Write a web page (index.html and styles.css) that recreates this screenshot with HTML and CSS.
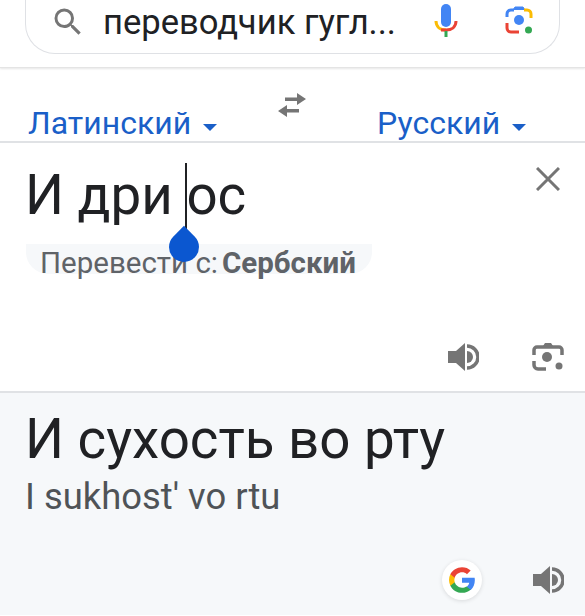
FILE: index.html
```html
<!DOCTYPE html>
<html lang="ru">
<head>
<meta charset="utf-8">
<title>Переводчик</title>
<link rel="stylesheet" href="styles.css">
</head>
<body>
<header class="top">
  <div class="search">
    <svg class="search-icon" viewBox="0 0 24 24" width="36" height="36"><path fill="#757575" d="M15.5 14h-.79l-.28-.27A6.47 6.47 0 0 0 16 9.5 6.5 6.5 0 1 0 9.5 16c1.61 0 3.09-.59 4.23-1.57l.27.28v.79l5 4.99L20.49 19l-4.99-5zm-6 0C7.01 14 5 11.99 5 9.5S7.01 5 9.5 5 14 7.01 14 9.5 11.99 14 9.5 14z"/></svg>
    <span class="query">переводчик гугл...</span>
    <svg class="mic" viewBox="0 0 24 36" width="24" height="36"><rect x="7" y="0" width="10" height="23" rx="5" fill="#4285f4"/><path d="M2 17c0 6 4.500 9 10 9" fill="none" stroke="#fbbc04" stroke-width="3"/><path d="M22 17c0 6-4.500 9-10 9H7" fill="none" stroke="#ea4335" stroke-width="3"/><rect x="10.500" y="27" width="3" height="6" fill="#34a853"/></svg>
    <svg class="lens" viewBox="0 0 28 32" width="28" height="32"><path d="M2 12V9a4 4 0 0 1 4-4h3" fill="none" stroke="#4285f4" stroke-width="3"/><path d="M8 5l2-3h8l2 3" fill="#4285f4" stroke="#4285f4" stroke-width="1"/><path d="M19 5h3a4 4 0 0 1 4 4v4" fill="none" stroke="#fbbc04" stroke-width="3"/><path d="M2 18v5a4 4 0 0 0 4 4h8" fill="none" stroke="#ea4335" stroke-width="3"/><circle cx="14" cy="15" r="5" fill="#4285f4"/><circle cx="23.500" cy="25" r="3.500" fill="#34a853"/></svg>
  </div>
</header>
<nav class="langs">
  <span class="lang lang-src">Латинский<i class="caret"></i></span>
  <svg class="swap" viewBox="0 0 30 24" width="30" height="24"><path fill="#757575" d="M20 0l9 6-9 6V8H8V4.500h12zM10 12v4h12v3.500H10V24l-9-6z"/></svg>
  <span class="lang lang-dst">Русский<i class="caret"></i></span>
</nav>
<section class="source">
  <div class="input-row">
    <div class="input">И дри <span class="cursor"><i class="cursor-line"></i><i class="cursor-drop"></i></span>ос</div>
    <svg class="close" viewBox="0 0 24 24" width="24" height="24"><path d="M1 1l22 22M23 1L1 23" stroke="#757575" stroke-width="3" fill="none"/></svg>
  </div>
  <div class="detect">Перевести с:<b>Сербский</b></div>
  <div class="actions">
    <svg class="speaker" viewBox="0 0 32 32" width="32" height="32"><path fill="#757575" d="M1 10h8l9-8v28l-9-8H1z"/><path fill="none" stroke="#757575" stroke-width="3.500" d="M20 5a11 11 0 0 1 0 22"/><path fill="#757575" d="M20 10a6 6 0 0 1 0 12z"/></svg>
    <svg class="cam" viewBox="0 0 32 32" width="32" height="32"><path d="M2 14v-5a3 3 0 0 1 3-3h22a3 3 0 0 1 3 3v5" fill="none" stroke="#757575" stroke-width="3.500"/><path d="M11 5l2-3h6l2 3z" fill="#757575"/><path d="M2 20v4a4 4 0 0 0 4 4h8" fill="none" stroke="#757575" stroke-width="3.500"/><circle cx="15" cy="16" r="5" fill="#757575"/><circle cx="27" cy="25" r="3.500" fill="#757575"/></svg>
  </div>
</section>
<section class="result">
  <div class="output">И сухость во рту</div>
  <div class="translit">I sukhost' vo rtu</div>
  <div class="actions result-actions">
    <span class="g-badge"><svg viewBox="0 0 48 48" width="28" height="28"><path fill="#4285f4" d="M46 24.500c0-1.600-.1-3.100-.4-4.500H24v8.600h12.400c-.5 2.800-2.100 5.200-4.500 6.800v5.600h7.200C43.400 37 46 31.300 46 24.500z"/><path fill="#34a853" d="M24 46c6 0 11.100-2 14.800-5.400l-7.200-5.600c-2 1.300-4.500 2.100-7.600 2.100-5.800 0-10.800-3.900-12.500-9.200H4v5.800C7.700 41 15.300 46 24 46z"/><path fill="#fbbc04" d="M11.500 27.900c-.9-2.600-.9-5.300 0-7.900v-5.800H4C1 20.200 1 27.700 4 33.700z"/><path fill="#ea4335" d="M24 10.800c3.300 0 6.200 1.100 8.500 3.300l6.400-6.400C35 4 30 2 24 2 15.300 2 7.700 7 4 14.200l7.500 5.800c1.700-5.300 6.700-9.200 12.500-9.200z"/></svg></span>
    <svg class="speaker" viewBox="0 0 32 32" width="32" height="32"><path fill="#757575" d="M1 10h8l9-8v28l-9-8H1z"/><path fill="none" stroke="#757575" stroke-width="3.500" d="M20 5a11 11 0 0 1 0 22"/><path fill="#757575" d="M20 10a6 6 0 0 1 0 12z"/></svg>
  </div>
</section>
</body>
</html>
```
FILE: styles.css
```css
* { box-sizing: border-box; }
html, body { margin: 0; padding: 0; }
body {
  width: 585px;
  height: 616px;
  overflow: hidden;
  background: #fff;
  font-family: Roboto, "Liberation Sans", sans-serif;
  color: #202124;
}
.top {
  height: 68px;
  padding: 0 25px;
  border-bottom: 1px solid #e4e4e4;
  box-shadow: 0 1px 2px rgba(0, 0, 0, 0.1);
}
.search {
  height: 54px;
  display: flex;
  align-items: center;
  border: 1px solid #dfe1e5;
  border-top: 0;
  border-radius: 0 0 30px 30px;
  padding: 0 26px 0 24px;
}
.search-icon { margin-right: 17px; margin-top: -10px; flex: none; }
.query {
  font-size: 34.6px;
  line-height: 44px;
  flex: 1;
  white-space: nowrap;
  margin-top: -10px;
}
.mic { margin-right: 47px; margin-top: -10px; flex: none; }
.lens { margin-top: -12px; flex: none; }
.langs {
  height: 75px;
  padding: 0 0 0 28px;
  display: flex;
  align-items: flex-end;
  border-bottom: 2px solid #e0e2e5;
}
.lang {
  color: #1a5fc8;
  font-size: 32px;
  line-height: 36px;
  display: flex;
  align-items: center;
}
.caret {
  width: 0;
  height: 0;
  margin: 9px 0 0 12px;
  border: 7px solid transparent;
  border-top-color: #1a5fc8;
  border-bottom: 0;
}
.swap { margin: 0 0 24px 60px; flex: none; }
.lang-dst { margin-left: 70px; }
.source {
  height: 250px;
  padding: 0 0 0 25px;
  border-bottom: 2px solid #e0e2e5;
  position: relative;
}
.input-row { display: flex; justify-content: space-between; padding-right: 25px; align-items: flex-start; }
.input {
  font-size: 54.7px;
  line-height: 64px;
  margin-top: 20px;
  white-space: pre;
}
.cursor { display: inline-block; width: 0; position: relative; height: 0; }
.cursor-line {
  position: absolute;
  left: -1px;
  top: -51px;
  width: 2px;
  height: 70px;
  background: #202124;
}
.cursor-drop {
  position: absolute;
  left: -17px;
  top: 18px;
  width: 30px;
  height: 30px;
  background: #0b57d0;
  border-radius: 50% 0 50% 50%;
  transform: rotate(-45deg);
  z-index: 2;
}
.close { margin-top: 24px; flex: none; }
.detect {
  margin: 17px 0 0 1px;
  width: 346px;
  height: 30px;
  padding-left: 14px;
  background: #f6f8fa;
  border-radius: 0 0 22px 22px;
  color: #5f6368;
  font-size: 29.5px;
  line-height: 38px;
  white-space: nowrap;
}
.detect b { margin-left: 4px; }
.actions {
  position: absolute;
  right: 21px;
  top: 198px;
  display: flex;
  gap: 53px;
  align-items: center;
}
.result {
  height: 222px;
  background: #f6f8fa;
  padding: 14px 0 0 25px;
  position: relative;
}
.output { font-size: 54.7px; line-height: 64px; }
.translit { font-size: 36.4px; line-height: 42px; color: #4f5357; margin-top: 5px; }
.result-actions { top: 167px; right: 21px; gap: 50px; }
.g-badge {
  width: 40px;
  height: 40px;
  border-radius: 50%;
  background: #fff;
  box-shadow: 0 1px 4px rgba(0, 0, 0, 0.12);
  display: flex;
  align-items: center;
  justify-content: center;
}
```
